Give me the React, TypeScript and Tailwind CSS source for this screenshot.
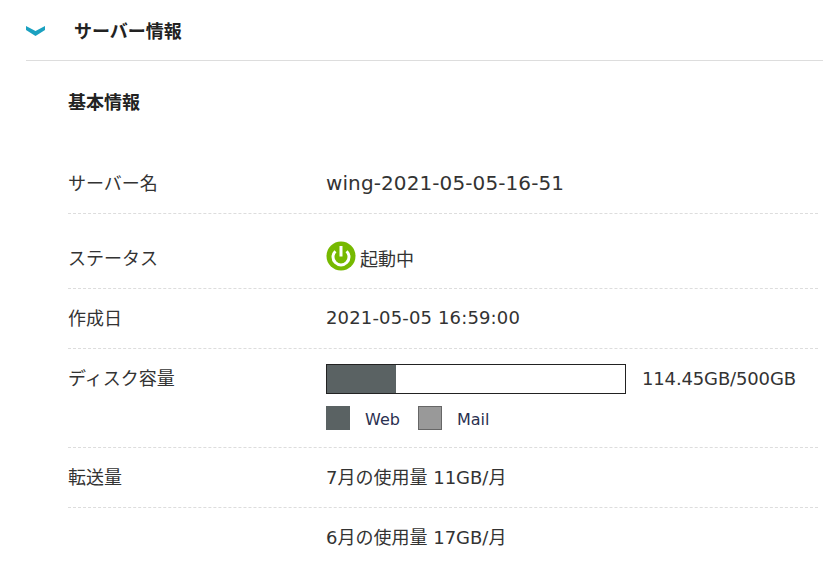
const font = { fontFamily: '"DejaVu Sans","Noto Sans CJK JP",sans-serif' };

function Row({ label, border = true, className, children }: { label: string; border?: boolean; className: string; children: React.ReactNode }) {
  return (
    <div className={`flex ${border ? "border-b border-dashed border-[#dddddd]" : ""} ${className}`}>
      <div className="w-[258px] shrink-0 mt-[1px] text-[#333333] text-[18px] leading-[24px]">{label}</div>
      <div className="flex-1 text-[#333333] text-[18px] leading-[24px]">{children}</div>
    </div>
  );
}

export default function App() {
  return (
    <div className="w-[823px] h-[567px] overflow-hidden bg-white text-[#333333] pl-[26px]" style={font}>
      <div className="h-[61px] border-b border-[#dddddd] flex items-center -mr-[1px]">
        <svg width="19" height="11" viewBox="0 0 19 11" className="mt-[2px]">
          <path d="M0 0 L9.5 5 L19 0 L19 4 L9.5 10 L0 4 Z" fill="#1ba1c0" />
        </svg>
        <div className="ml-[29px] mt-[3px] text-[18px] font-bold leading-[24px] text-[#222222]">サーバー情報</div>
      </div>
      <div className="pl-[42px] pr-[5px]">
        <div className="pt-[30px] text-[18px] font-bold leading-[24px] text-[#222222]">基本情報</div>
        <Row label="サーバー名" className="mt-[56px] h-[43px] items-start">
          <span className="text-[20px] tracking-[0.1px]">wing-2021-05-05-16-51</span>
        </Row>
        <Row label="ステータス" className="h-[75px] pt-[32px]">
          <div className="flex items-center -mt-[6px]">
            <svg width="30" height="30" viewBox="0 0 30 30">
              <circle cx="15" cy="15" r="14.5" fill="#76b900" />
              <path d="M9.4 10.2 A8 8 0 1 0 20.6 10.2" fill="none" stroke="#ffffff" strokeWidth="3" />
              <path d="M15 5 V15.5" fill="none" stroke="#ffffff" strokeWidth="3" />
            </svg>
            <span className="ml-[4px] mt-[8px]">起動中</span>
          </div>
        </Row>
        <Row label="作成日" className="h-[60px] pt-[17px]"><span className="tracking-[0.15px]">2021-05-05 16:59:00</span></Row>
        <Row label="ディスク容量" className="h-[99px] pt-[17px]">
          <div className="flex items-center -mt-[2px]">
            <div className="w-[300px] h-[30px] border border-[#222222] bg-white">
              <div className="w-[69px] h-full bg-[#5a6263]" />
            </div>
            <span className="ml-[16px] tracking-[-0.15px]">114.45GB/500GB</span>
          </div>
          <div className="flex items-center mt-[10px] leading-[24px] text-[16px]">
            <div className="w-[24px] h-[24px] bg-[#5a6263]" />
            <span className="ml-[15px] mt-[4px] text-[#2a3050]">Web</span>
            <div className="ml-[18px] w-[24px] h-[24px] bg-[#999999] border border-[#666666]" />
            <span className="ml-[15px] mt-[4px] text-[#2a3050]">Mail</span>
          </div>
        </Row>
        <Row label="転送量" className="h-[60px] pt-[17px]"><div className="mt-[1px]">7月の使用量 11GB/月</div></Row>
        <Row label="" border={false} className="pt-[17px]"><div className="mt-[1px]">6月の使用量 17GB/月</div></Row>
      </div>
    </div>
  );
}
